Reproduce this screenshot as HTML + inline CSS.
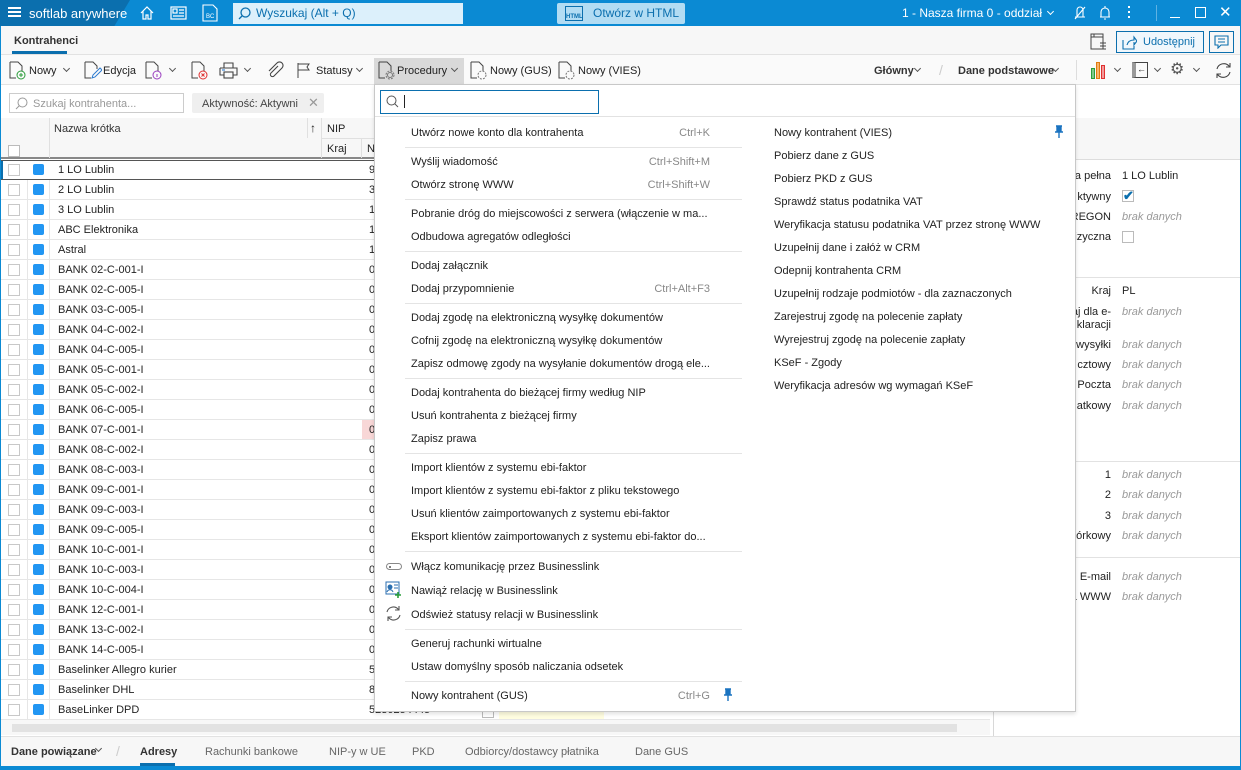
<!DOCTYPE html>
<html><head><meta charset="utf-8"><style>
*{box-sizing:border-box;margin:0;padding:0}
body{width:1241px;height:770px;overflow:hidden;font-family:"Liberation Sans",sans-serif;font-size:11px;color:#222;background:#fff;position:relative}
.a{position:absolute;white-space:nowrap}
.ch{position:absolute;width:5px;height:5px;border-right:1px solid #555;border-bottom:1px solid #555;transform:rotate(45deg)}
.row{position:absolute;left:0;width:990px;height:20px;border-bottom:1px solid #e6e6e6}
.row .cb{position:absolute;left:8px;top:4px;width:12px;height:12px;border:1px solid #c8c8c8;background:#fff}
.row .sq{position:absolute;left:33px;top:4px;width:11px;height:11px;background:#2196f3;border-radius:2px}
.row .n{position:absolute;left:58px;top:4px}
.row .p{position:absolute;left:369px;top:4px}
.mi{position:absolute;font-size:11px;color:#222}
.sc{position:absolute;color:#888;font-size:11px;text-align:right}
.sep{position:absolute;left:405px;width:337px;height:1px;background:#e4e4e4}
.lb{position:absolute;right:130px;text-align:right;color:#222}
.vl{position:absolute;left:1122px;color:#999;font-style:italic}
</style></head><body>
<div class="a" style="left:0;top:0;width:1241px;height:26px;background:#0b8ad3"></div>
<div class="a" style="left:0;top:0;width:130px;height:26px;background:#0b6fae;clip-path:polygon(0 0,100% 0,88% 100%,0 100%)"></div>
<div class="a" style="left:8px;top:7px;width:13px;height:2px;background:#fff;box-shadow:0 4px #fff,0 8px #fff"></div>
<div class="a" style="left:29px;top:6px;color:#fff;font-size:13px">softlab anywhere</div>
<svg class="a" style="left:139px;top:5px" width="16" height="16" viewBox="0 0 16 16" fill="none" stroke="#fff" stroke-width="1.2"><path d="M2 8L8 2l6 6M4 6v8h3v-4h2v4h3V6"/></svg>
<svg class="a" style="left:170px;top:6px" width="17" height="14" viewBox="0 0 17 14" fill="none" stroke="#fff" stroke-width="1.2"><rect x="1" y="1" width="15" height="12"/><rect x="3" y="3" width="4" height="4"/><path d="M9 4h5M9 7h5M3 10h11"/></svg>
<svg class="a" style="left:202px;top:4px" width="16" height="18" viewBox="0 0 16 18" fill="none" stroke="#fff" stroke-width="1.1"><path d="M1 1h10l4 4v12H1z"/><text x="4" y="14" fill="#fff" stroke="none" font-size="6" font-family="Liberation Sans">BC</text></svg>
<div class="a" style="left:233px;top:3px;width:230px;height:21px;background:#dcf0fb"></div>
<svg class="a" style="left:238px;top:7px" width="13" height="13" viewBox="0 0 13 13" fill="none" stroke="#0b6fae" stroke-width="1.3"><circle cx="7.5" cy="5.5" r="4.5"/><path d="M4.5 8.5L1 12"/></svg>
<div class="a" style="left:256px;top:6px;color:#0b6fae;font-size:12px">Wyszukaj (Alt + Q)</div>
<div class="a" style="left:557px;top:3px;width:128px;height:21px;background:#b2dcf3;border-radius:2px"></div>
<div class="a" style="left:565px;top:6px;width:18px;height:15px;border:1px solid #0b6fae;font-size:6px;color:#0b6fae;padding-top:7px;text-align:center;font-weight:bold">HTML</div>
<div class="a" style="left:593px;top:6px;color:#0b6fae;font-size:12px">Otwórz w HTML</div>
<div class="a" style="left:902px;top:6px;color:#fff;font-size:12px">1 - Nasza firma 0 - oddział</div>
<div class="ch" style="left:1048px;top:9px;border-color:#fff"></div>
<svg class="a" style="left:1072px;top:5px" width="16" height="16" viewBox="0 0 16 16" fill="none" stroke="#fff" stroke-width="1.1"><path d="M5 12V5a3 3 0 016 0v7M3 14L13 2M3 12h10"/></svg>
<svg class="a" style="left:1098px;top:5px" width="14" height="16" viewBox="0 0 14 16" fill="none" stroke="#fff" stroke-width="1.1"><path d="M3 12V7a4 4 0 018 0v5H2h10M6 14h2M7 1v2"/></svg>
<div class="a" style="left:1128px;top:6px;width:2px;height:2px;background:#fff;box-shadow:0 5px #fff,0 10px #fff"></div>
<div class="a" style="left:1156px;top:5px;width:1px;height:16px;background:#5fb2e3"></div>
<div class="a" style="left:1170px;top:17px;width:10px;height:1px;background:#fff"></div>
<div class="a" style="left:1195px;top:7px;width:11px;height:11px;border:1.2px solid #fff"></div>
<div class="a" style="left:1219px;top:3px;color:#fff;font-size:15px">✕</div>
<div class="a" style="left:1px;top:26px;width:1239px;height:29px;background:#f7f7f7;border-bottom:1px solid #e2e2e2"></div>
<div class="a" style="left:14px;top:35px;font-size:11px;font-weight:bold;color:#333">Kontrahenci</div>
<div class="a" style="left:12px;top:51px;width:55px;height:3px;background:#0b6fae"></div>
<svg class="a" style="left:1089px;top:32px" width="20" height="20" viewBox="0 0 20 20" fill="none" stroke="#444" stroke-width="1"><rect x="2" y="2" width="12" height="15"/><path d="M2 5h12M5 2v3M11 11h6M11 14h6M11 17h6"/></svg>
<div class="a" style="left:1116px;top:31px;width:88px;height:22px;border:1px solid #0b6fae;background:#f0f7fc"></div>
<svg class="a" style="left:1122px;top:35px" width="15" height="15" viewBox="0 0 15 15" fill="none" stroke="#0b6fae" stroke-width="1.1"><path d="M1 5v9h11v-3M5 10c1-4 4-5 7-5V2l3 4-3 4V7"/></svg>
<div class="a" style="left:1143px;top:36px;color:#0b6fae;font-size:11px">Udostępnij</div>
<div class="a" style="left:1209px;top:31px;width:25px;height:22px;border:1px solid #0b6fae"></div>
<svg class="a" style="left:1214px;top:35px" width="15" height="14" viewBox="0 0 15 14" fill="none" stroke="#0b6fae" stroke-width="1.1"><path d="M1 1h13v9H7l-3 3v-3H1zM4 4h7M4 7h7"/></svg>
<div class="a" style="left:1px;top:55px;width:1239px;height:30px;background:#fafafa;border-bottom:1px solid #e2e2e2"></div>
<svg class="a" style="left:9px;top:61px" width="18" height="19" viewBox="0 0 18 19" fill="none" stroke="#444" stroke-width="1"><path d="M1 1h8l4 4v5M1 1v16h6"/><circle cx="12" cy="14" r="4" stroke="#2a9d3a"/><path d="M12 12v4M10 14h4" stroke="#2a9d3a"/></svg>
<div class="a" style="left:29px;top:65px;font-size:11px">Nowy</div><div class="ch" style="left:64px;top:66px"></div>
<svg class="a" style="left:84px;top:61px" width="18" height="19" viewBox="0 0 18 19" fill="none" stroke="#444" stroke-width="1"><path d="M1 1h8l4 4v3M1 1v16h6"/><path d="M8 17l1-3 7-7 2 2-7 7z" stroke="#2b7ad0"/></svg>
<div class="a" style="left:103px;top:65px">Edycja</div>
<svg class="a" style="left:145px;top:61px" width="18" height="19" viewBox="0 0 18 19" fill="none" stroke="#444" stroke-width="1"><path d="M1 1h8l4 4v5M1 1v16h6"/><circle cx="12" cy="14" r="4" stroke="#9b3fc0"/><path d="M12 13v3" stroke="#9b3fc0"/></svg>
<div class="ch" style="left:170px;top:66px"></div>
<svg class="a" style="left:191px;top:61px" width="18" height="19" viewBox="0 0 18 19" fill="none" stroke="#444" stroke-width="1"><path d="M1 1h8l4 4v5M1 1v16h6"/><circle cx="12" cy="14" r="4" stroke="#e03030"/><path d="M10.5 12.5l3 3M13.5 12.5l-3 3" stroke="#e03030"/></svg>
<svg class="a" style="left:219px;top:62px" width="19" height="17" viewBox="0 0 19 17" fill="none" stroke="#444" stroke-width="1.1"><path d="M5 6V1h9v5M1 6h17v7h-4M5 13H1V6"/><rect x="5" y="10" width="9" height="6"/><path d="M3 8h3" stroke="#2b7ad0"/></svg>
<div class="ch" style="left:245px;top:66px"></div>
<svg class="a" style="left:266px;top:61px" width="18" height="19" viewBox="0 0 18 19" fill="none" stroke="#444" stroke-width="1.1"><path d="M12 5L5 12a2 2 0 003 3l8-8a3.5 3.5 0 00-5-5L3 10"/></svg>
<svg class="a" style="left:297px;top:62px" width="16" height="17" viewBox="0 0 16 17" fill="none" stroke="#444" stroke-width="1"><path d="M1 1v15M1 2h11l-2 3 2 3H1"/></svg>
<div class="a" style="left:316px;top:65px">Statusy</div><div class="ch" style="left:357px;top:66px"></div>
<div class="a" style="left:374px;top:58px;width:90px;height:26px;background:#d9d9d9"></div>
<svg class="a" style="left:378px;top:61px" width="18" height="19" viewBox="0 0 18 19" fill="none" stroke="#444" stroke-width="1"><path d="M1 1h8l4 4v5M1 1v16h6"/><circle cx="12" cy="14" r="2.5" stroke="#777"/><circle cx="12" cy="14" r="4" stroke="#777" stroke-dasharray="2 1.2"/></svg>
<div class="a" style="left:397px;top:65px">Procedury</div><div class="ch" style="left:452px;top:66px"></div>
<svg class="a" style="left:470px;top:61px" width="18" height="19" viewBox="0 0 18 19" fill="none" stroke="#444" stroke-width="1"><path d="M1 1h8l4 4v5M1 1v16h6"/><circle cx="12" cy="14" r="4" stroke="#777" stroke-dasharray="2 1.2"/></svg>
<div class="a" style="left:490px;top:65px">Nowy (GUS)</div>
<svg class="a" style="left:558px;top:61px" width="18" height="19" viewBox="0 0 18 19" fill="none" stroke="#444" stroke-width="1"><path d="M1 1h8l4 4v5M1 1v16h6"/><circle cx="12" cy="14" r="4" stroke="#777" stroke-dasharray="2 1.2"/></svg>
<div class="a" style="left:578px;top:65px">Nowy (VIES)</div>
<div class="a" style="left:874px;top:65px;font-weight:bold;color:#333">Główny</div><div class="ch" style="left:915px;top:66px"></div>
<div class="a" style="left:939px;top:62px;color:#ccc;font-size:14px">/</div>
<div class="a" style="left:958px;top:65px;font-weight:bold;color:#333">Dane podstawowe</div><div class="ch" style="left:1053px;top:66px"></div>
<div class="a" style="left:1076px;top:60px;width:1px;height:20px;background:#ddd"></div>
<div class="a" style="left:1091px;top:68px;width:4px;height:11px;background:#7ec88a;border:1px solid #2a9d3a"></div>
<div class="a" style="left:1096px;top:62px;width:4px;height:17px;background:#f7b26a;border:1px solid #e07c10"></div>
<div class="a" style="left:1101px;top:65px;width:4px;height:14px;background:#f19a9a;border:1px solid #e03030"></div>
<div class="ch" style="left:1115px;top:66px"></div>
<div class="a" style="left:1132px;top:62px;width:16px;height:16px;border:1px solid #444;border-left:4px solid #999;font-size:9px;text-align:center;line-height:13px">←</div>
<div class="ch" style="left:1155px;top:66px"></div>
<div class="a" style="left:1170px;top:59px;font-size:16px;color:#555">⚙</div>
<div class="ch" style="left:1194px;top:66px"></div>
<svg class="a" style="left:1214px;top:61px" width="19" height="19" viewBox="0 0 19 19" fill="none" stroke="#444" stroke-width="1.1"><path d="M3 8a7 7 0 0112-3l1 1M16 11a7 7 0 01-12 3l-1-1M16 2v4h-4M3 17v-4h4"/></svg>
<div class="a" style="left:9px;top:93px;width:175px;height:20px;border:1px solid #ccc"></div>
<svg class="a" style="left:15px;top:97px" width="13" height="13" viewBox="0 0 13 13" fill="none" stroke="#999" stroke-width="1"><circle cx="7.5" cy="5.5" r="4.5"/><path d="M4.5 8.5L1 12"/></svg>
<div class="a" style="left:33px;top:98px;color:#999">Szukaj kontrahenta...</div>
<div class="a" style="left:192px;top:93px;width:132px;height:20px;background:#efefef;border-radius:2px"></div>
<div class="a" style="left:202px;top:98px;color:#444">Aktywność: Aktywni</div>
<div class="a" style="left:308px;top:95px;color:#999;font-size:13px">✕</div>
<div class="a" style="left:1px;top:118px;width:989px;height:41px;background:#f7f7f7;border-bottom:2px solid #888"></div>
<div class="a" style="left:49px;top:118px;width:1px;height:40px;background:#e0e0e0"></div>
<div class="a" style="left:307px;top:118px;width:1px;height:20px;background:#e0e0e0"></div>
<div class="a" style="left:321px;top:118px;width:1px;height:40px;background:#e0e0e0"></div>
<div class="a" style="left:322px;top:138px;width:668px;height:1px;background:#e0e0e0"></div>
<div class="a" style="left:54px;top:123px;color:#333">Nazwa krótka</div>
<div class="a" style="left:310px;top:121px;font-size:12px">↑</div>
<div class="a" style="left:327px;top:123px">NIP</div>
<div class="a" style="left:327px;top:143px">Kraj</div>
<div class="a" style="left:361px;top:138px;width:1px;height:20px;background:#e0e0e0"></div>
<div class="a" style="left:367px;top:143px">N</div>
<div class="a" style="left:8px;top:145px;width:12px;height:12px;border:1px solid #bbb;background:#fff"></div>
<div class="a" style="left:0;top:160px;width:990px;height:560px">
<div class="row" style="top:0;border-bottom:none;box-shadow:inset 0 0 0 1px #555,inset 3px 0 0 #0b6fae"><div class="cb"></div><div class="sq"></div><div class="n">1 LO Lublin</div><div class="p">9</div></div>
<div class="row" style="top:20px"><div class="cb"></div><div class="sq"></div><div class="n">2 LO Lublin</div><div class="p">3</div></div>
<div class="row" style="top:40px"><div class="cb"></div><div class="sq"></div><div class="n">3 LO Lublin</div><div class="p">1</div></div>
<div class="row" style="top:60px"><div class="cb"></div><div class="sq"></div><div class="n">ABC Elektronika</div><div class="p">1</div></div>
<div class="row" style="top:80px"><div class="cb"></div><div class="sq"></div><div class="n">Astral</div><div class="p">1</div></div>
<div class="row" style="top:100px"><div class="cb"></div><div class="sq"></div><div class="n">BANK 02-C-001-I</div><div class="p">0</div></div>
<div class="row" style="top:120px"><div class="cb"></div><div class="sq"></div><div class="n">BANK 02-C-005-I</div><div class="p">0</div></div>
<div class="row" style="top:140px"><div class="cb"></div><div class="sq"></div><div class="n">BANK 03-C-005-I</div><div class="p">0</div></div>
<div class="row" style="top:160px"><div class="cb"></div><div class="sq"></div><div class="n">BANK 04-C-002-I</div><div class="p">0</div></div>
<div class="row" style="top:180px"><div class="cb"></div><div class="sq"></div><div class="n">BANK 04-C-005-I</div><div class="p">0</div></div>
<div class="row" style="top:200px"><div class="cb"></div><div class="sq"></div><div class="n">BANK 05-C-001-I</div><div class="p">0</div></div>
<div class="row" style="top:220px"><div class="cb"></div><div class="sq"></div><div class="n">BANK 05-C-002-I</div><div class="p">0</div></div>
<div class="row" style="top:240px"><div class="cb"></div><div class="sq"></div><div class="n">BANK 06-C-005-I</div><div class="p">0</div></div>
<div class="row" style="top:260px"><div class="cb"></div><div class="sq"></div><div class="n">BANK 07-C-001-I</div><div class="a" style="left:362px;top:0;width:12px;height:19px;background:#f8d7d7"></div><div class="p">0</div></div>
<div class="row" style="top:280px"><div class="cb"></div><div class="sq"></div><div class="n">BANK 08-C-002-I</div><div class="p">0</div></div>
<div class="row" style="top:300px"><div class="cb"></div><div class="sq"></div><div class="n">BANK 08-C-003-I</div><div class="p">0</div></div>
<div class="row" style="top:320px"><div class="cb"></div><div class="sq"></div><div class="n">BANK 09-C-001-I</div><div class="p">0</div></div>
<div class="row" style="top:340px"><div class="cb"></div><div class="sq"></div><div class="n">BANK 09-C-003-I</div><div class="p">0</div></div>
<div class="row" style="top:360px"><div class="cb"></div><div class="sq"></div><div class="n">BANK 09-C-005-I</div><div class="p">0</div></div>
<div class="row" style="top:380px"><div class="cb"></div><div class="sq"></div><div class="n">BANK 10-C-001-I</div><div class="p">0</div></div>
<div class="row" style="top:400px"><div class="cb"></div><div class="sq"></div><div class="n">BANK 10-C-003-I</div><div class="p">0</div></div>
<div class="row" style="top:420px"><div class="cb"></div><div class="sq"></div><div class="n">BANK 10-C-004-I</div><div class="p">0</div></div>
<div class="row" style="top:440px"><div class="cb"></div><div class="sq"></div><div class="n">BANK 12-C-001-I</div><div class="p">0</div></div>
<div class="row" style="top:460px"><div class="cb"></div><div class="sq"></div><div class="n">BANK 13-C-002-I</div><div class="p">0</div></div>
<div class="row" style="top:480px"><div class="cb"></div><div class="sq"></div><div class="n">BANK 14-C-005-I</div><div class="p">0</div></div>
<div class="row" style="top:500px"><div class="cb"></div><div class="sq"></div><div class="n">Baselinker Allegro kurier</div><div class="p">5</div></div>
<div class="row" style="top:520px"><div class="cb"></div><div class="sq"></div><div class="n">Baselinker DHL</div><div class="p">8</div></div>
<div class="row" style="top:540px"><div class="cb"></div><div class="sq"></div><div class="n">BaseLinker DPD</div><div class="p">5230254445</div><div class="a" style="left:482px;top:6px;width:12px;height:12px;border:1px solid #bbb"></div><div class="a" style="left:499px;top:0;width:105px;height:19px;background:#fffde0"></div></div>
<div class="a" style="left:27px;top:20px;width:1px;height:540px;background:#e6e6e6"></div>
<div class="a" style="left:49px;top:20px;width:1px;height:540px;background:#e6e6e6"></div>
</div>
<div class="a" style="left:1px;top:720px;width:989px;height:15px;background:#f7f7f7"></div>
<div class="a" style="left:12px;top:724px;width:945px;height:8px;background:#e2e2e2"></div>
<div class="a" style="left:1px;top:736px;width:1239px;height:30px;background:#f7f7f7;border-top:1px solid #e2e2e2"></div>
<div class="a" style="left:11px;top:746px;font-weight:bold;color:#333">Dane powiązane</div><div class="ch" style="left:96px;top:746px"></div>
<div class="a" style="left:116px;top:743px;color:#ccc;font-size:14px">/</div>
<div class="a" style="left:140px;top:746px;font-weight:bold;color:#333">Adresy</div>
<div class="a" style="left:140px;top:763px;width:35px;height:3px;background:#0b6fae"></div>
<div class="a" style="left:205px;top:746px;color:#666">Rachunki bankowe</div>
<div class="a" style="left:329px;top:746px;color:#666">NIP-y w UE</div>
<div class="a" style="left:412px;top:746px;color:#666">PKD</div>
<div class="a" style="left:465px;top:746px;color:#666">Odbiorcy/dostawcy płatnika</div>
<div class="a" style="left:635px;top:746px;color:#666">Dane GUS</div>
<div class="a" style="left:0;top:766px;width:1241px;height:4px;background:#0b8ad3"></div>
<div class="a" style="left:0;top:26px;width:1px;height:744px;background:#0b8ad3"></div>
<div class="a" style="left:1240px;top:26px;width:1px;height:744px;background:#0b8ad3"></div>
<div class="a" style="left:993px;top:85px;width:1px;height:651px;background:#d8d8d8"></div>
<div class="a" style="left:994px;top:118px;width:246px;height:42px;background:#f7f7f7;border-bottom:1px solid #ddd"></div>
<div class="lb" style="top:170px">a pełna</div><div class="a" style="left:1122px;top:170px">1 LO Lublin</div>
<div class="lb" style="top:191px">ktywny</div><div class="a" style="left:1122px;top:190px;width:12px;height:12px;border:1px solid #bbb;color:#0b6fae;font-size:13px;line-height:9px;font-weight:bold">✔</div>
<div class="lb" style="top:211px">REGON</div><div class="vl" style="top:211px">brak danych</div>
<div class="lb" style="top:231px">izyczna</div><div class="a" style="left:1122px;top:231px;width:12px;height:12px;border:1px solid #bbb"></div>
<div class="a" style="left:994px;top:277px;width:246px;height:1px;background:#e2e2e2"></div>
<div class="lb" style="top:285px">Kraj</div><div class="a" style="left:1122px;top:285px">PL</div>
<div class="lb" style="top:306px;line-height:13px">aj dla e-<br>klaracji</div><div class="vl" style="top:306px">brak danych</div>
<div class="lb" style="top:339px">wysyłki</div><div class="vl" style="top:339px">brak danych</div>
<div class="lb" style="top:359px">cztowy</div><div class="vl" style="top:359px">brak danych</div>
<div class="lb" style="top:379px">Poczta</div><div class="vl" style="top:379px">brak danych</div>
<div class="lb" style="top:400px">atkowy</div><div class="vl" style="top:400px">brak danych</div>
<div class="a" style="left:994px;top:461px;width:246px;height:1px;background:#e2e2e2"></div>
<div class="lb" style="top:469px">1</div><div class="vl" style="top:469px">brak danych</div>
<div class="lb" style="top:489px">2</div><div class="vl" style="top:489px">brak danych</div>
<div class="lb" style="top:510px">3</div><div class="vl" style="top:510px">brak danych</div>
<div class="lb" style="top:530px">órkowy</div><div class="vl" style="top:530px">brak danych</div>
<div class="a" style="left:994px;top:557px;width:246px;height:1px;background:#e2e2e2"></div>
<div class="lb" style="top:571px">E-mail</div><div class="vl" style="top:571px">brak danych</div>
<div class="lb" style="top:591px">a WWW</div><div class="vl" style="top:591px">brak danych</div>
<div class="a" style="left:374px;top:84px;width:702px;height:628px;background:#fff;border:1px solid #c8c8c8;box-shadow:0 2px 4px rgba(0,0,0,.12)"></div>
<div class="a" style="left:380px;top:90px;width:219px;height:24px;border:1px solid #0b6fae"></div>
<svg class="a" style="left:386px;top:95px" width="13" height="13" viewBox="0 0 13 13" fill="none" stroke="#555" stroke-width="1"><circle cx="5.5" cy="5.5" r="4.5"/><path d="M8.5 8.5L12 12"/></svg>
<div class="a" style="left:404px;top:95px;width:1px;height:13px;background:#222"></div>
<div class="a" style="left:375px;top:116px;width:700px;height:1px;background:#e2e2e2"></div>
<div class="mi" style="left:411px;top:127px">Utwórz nowe konto dla kontrahenta</div><div class="sc" style="left:600px;width:110px;top:127px">Ctrl+K</div>
<div class="sep" style="top:147px"></div>
<div class="mi" style="left:411px;top:156px">Wyślij wiadomość</div><div class="sc" style="left:600px;width:110px;top:156px">Ctrl+Shift+M</div>
<div class="mi" style="left:411px;top:179px">Otwórz stronę WWW</div><div class="sc" style="left:600px;width:110px;top:179px">Ctrl+Shift+W</div>
<div class="sep" style="top:199px"></div>
<div class="mi" style="left:411px;top:208px">Pobranie dróg do miejscowości z serwera (włączenie w ma...</div>
<div class="mi" style="left:411px;top:231px">Odbudowa agregatów odległości</div>
<div class="sep" style="top:251px"></div>
<div class="mi" style="left:411px;top:260px">Dodaj załącznik</div>
<div class="mi" style="left:411px;top:283px">Dodaj przypomnienie</div><div class="sc" style="left:600px;width:110px;top:283px">Ctrl+Alt+F3</div>
<div class="sep" style="top:303px"></div>
<div class="mi" style="left:411px;top:312px">Dodaj zgodę na elektroniczną wysyłkę dokumentów</div>
<div class="mi" style="left:411px;top:335px">Cofnij zgodę na elektroniczną wysyłkę dokumentów</div>
<div class="mi" style="left:411px;top:358px">Zapisz odmowę zgody na wysyłanie dokumentów drogą ele...</div>
<div class="sep" style="top:378px"></div>
<div class="mi" style="left:411px;top:387px">Dodaj kontrahenta do bieżącej firmy według NIP</div>
<div class="mi" style="left:411px;top:410px">Usuń kontrahenta z bieżącej firmy</div>
<div class="mi" style="left:411px;top:433px">Zapisz prawa</div>
<div class="sep" style="top:453px"></div>
<div class="mi" style="left:411px;top:462px">Import klientów z systemu ebi-faktor</div>
<div class="mi" style="left:411px;top:485px">Import klientów z systemu ebi-faktor z pliku tekstowego</div>
<div class="mi" style="left:411px;top:508px">Usuń klientów zaimportowanych z systemu ebi-faktor</div>
<div class="mi" style="left:411px;top:531px">Eksport klientów zaimportowanych z systemu ebi-faktor do...</div>
<div class="sep" style="top:551px"></div>
<div class="a" style="left:386px;top:563px;width:16px;height:7px;border:1px solid #888;border-radius:4px"></div><div class="a" style="left:389px;top:566px;width:2px;height:2px;background:#555;border-radius:1px"></div>
<div class="mi" style="left:411px;top:561px">Włącz komunikację przez Businesslink</div>
<svg class="a" style="left:385px;top:581px" width="17" height="17" viewBox="0 0 17 17" fill="none" stroke="#2b6fb0" stroke-width="1"><rect x="1" y="1" width="13" height="12"/><circle cx="5" cy="6" r="2" fill="#2b6fb0"/><path d="M2 11c1-3 5-3 6 0M9 4h4M9 7h4"/><path d="M13 11v6M10 14h6" stroke="#2a9d3a" stroke-width="1.6"/></svg>
<div class="mi" style="left:411px;top:585px">Nawiąż relację w Businesslink</div>
<svg class="a" style="left:385px;top:605px" width="17" height="17" viewBox="0 0 17 17" fill="none" stroke="#555" stroke-width="1.1"><path d="M2 7a6.5 6.5 0 0111-3l1 1M15 10a6.5 6.5 0 01-11 3l-1-1M14 1v4h-4M3 16v-4h4"/></svg>
<div class="mi" style="left:411px;top:609px">Odśwież statusy relacji w Businesslink</div>
<div class="sep" style="top:629px"></div>
<div class="mi" style="left:411px;top:638px">Generuj rachunki wirtualne</div>
<div class="mi" style="left:411px;top:661px">Ustaw domyślny sposób naliczania odsetek</div>
<div class="sep" style="top:681px"></div>
<div class="mi" style="left:411px;top:690px">Nowy kontrahent (GUS)</div><div class="sc" style="left:600px;width:110px;top:690px">Ctrl+G</div>
<svg class="a" style="left:724px;top:688px" width="8" height="13" viewBox="0 0 8 13"><path d="M1 1h6M2 1v6h4V1M0 7h8M4 7v6" stroke="#1a73c0" stroke-width="1.4" fill="#1a73c0"/></svg>
<div class="mi" style="left:774px;top:127px">Nowy kontrahent (VIES)</div>
<svg class="a" style="left:1055px;top:125px" width="8" height="13" viewBox="0 0 8 13"><path d="M1 1h6M2 1v6h4V1M0 7h8M4 7v6" stroke="#1a73c0" stroke-width="1.4" fill="#1a73c0"/></svg>
<div class="mi" style="left:774px;top:150px">Pobierz dane z GUS</div>
<div class="mi" style="left:774px;top:173px">Pobierz PKD z GUS</div>
<div class="mi" style="left:774px;top:196px">Sprawdź status podatnika VAT</div>
<div class="mi" style="left:774px;top:219px">Weryfikacja statusu podatnika VAT przez stronę WWW</div>
<div class="mi" style="left:774px;top:242px">Uzupełnij dane i załóż w CRM</div>
<div class="mi" style="left:774px;top:265px">Odepnij kontrahenta CRM</div>
<div class="mi" style="left:774px;top:288px">Uzupełnij rodzaje podmiotów - dla zaznaczonych</div>
<div class="mi" style="left:774px;top:311px">Zarejestruj zgodę na polecenie zapłaty</div>
<div class="mi" style="left:774px;top:334px">Wyrejestruj zgodę na polecenie zapłaty</div>
<div class="mi" style="left:774px;top:357px">KSeF - Zgody</div>
<div class="mi" style="left:774px;top:380px">Weryfikacja adresów wg wymagań KSeF</div>
</body></html>
